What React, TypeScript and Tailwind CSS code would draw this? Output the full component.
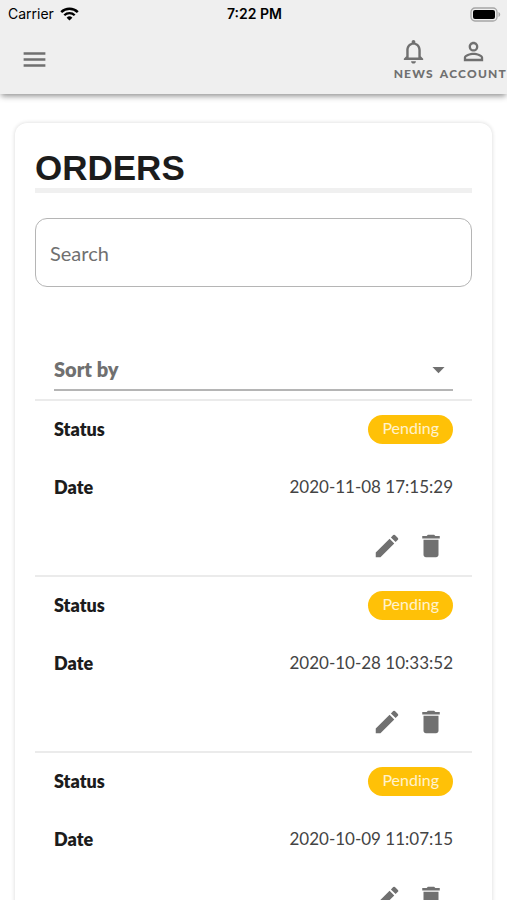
import { useState } from 'react';
import {
    MdArrowDropDown,
    MdDelete,
    MdEdit,
    MdMenu,
    MdNotificationsNone,
    MdPersonOutline,
} from 'react-icons/md';

interface Order {
    id: number;
    status: string;
    date: string;
}

const initialOrders: Order[] = [
    { id: 1, status: 'Pending', date: '2020-11-08 17:15:29' },
    { id: 2, status: 'Pending', date: '2020-10-28 10:33:52' },
    { id: 3, status: 'Pending', date: '2020-10-09 11:07:15' },
];

function StatusBar() {
    return (
        <div className="grid h-7 grid-cols-3 items-center pr-1.5 pl-2 font-['Inter',sans-serif] text-sm text-black">
            <div className="flex items-center gap-1.5">
                <span>Carrier</span>
                <svg width="19" height="14" viewBox="0 0 19 14" fill="none" stroke="currentColor">
                    <path d="M1.2 5.2a11.8 11.8 0 0 1 16.6 0" strokeWidth="2.5" />
                    <path d="M4.3 8.3a7.4 7.4 0 0 1 10.4 0" strokeWidth="2.3" />
                    <path d="M9.5 13.6 6.6 10.7a4.1 4.1 0 0 1 5.8 0z" fill="currentColor" stroke="none" />
                </svg>
            </div>
            <span className="text-center font-semibold">7:22 PM</span>
            <svg className="justify-self-end" width="31" height="15" viewBox="0 0 31 15">
                <rect x="1" y="1" width="26" height="13" rx="4" fill="none" stroke="#a6a6a6" strokeWidth="1.3" />
                <rect x="3" y="3" width="22" height="9" rx="2" fill="#000" />
                <path d="M28.5 5v5c1-.4 1.7-1.3 1.7-2.5s-.7-2.1-1.7-2.5z" fill="#a6a6a6" />
            </svg>
        </div>
    );
}

function Header() {
    return (
        <header className="relative shrink-0 bg-[#efefef] shadow-[0_3px_6px_-1px_rgba(0,0,0,0.45)]">
            <StatusBar />
            <div className="flex h-[66px] items-start justify-between pl-5 text-[#707070]">
                <button type="button" aria-label="Menu" className="mt-[17px]">
                    <MdMenu size={29} />
                </button>
                <nav className="mt-[9px] flex gap-1.5 text-xs font-black tracking-widest">
                    <button type="button" className="flex flex-col items-center">
                        <MdNotificationsNone size={29} />
                        NEWS
                    </button>
                    <button type="button" className="flex flex-col items-center">
                        <MdPersonOutline size={29} />
                        ACCOUNT
                    </button>
                </nav>
            </div>
        </header>
    );
}

interface OrderItemProps {
    order: Order;
    onDelete: (id: number) => void;
}

function OrderItem({ order, onDelete }: OrderItemProps) {
    return (
        <li className="border-t-2 border-[#ebebeb] px-[19px]">
            <div className="flex h-[58px] items-center justify-between pb-0.5">
                <span className="text-lg font-extrabold">Status</span>
                <span className="rounded-full bg-[#ffc107] px-3.5 pt-px pb-1 text-base leading-6 text-white/80">
                    {order.status}
                </span>
            </div>
            <div className="flex h-[58px] items-center justify-between pb-0.5">
                <span className="text-lg font-extrabold">Date</span>
                <span className="text-[17px] text-[#444]">{order.date}</span>
            </div>
            <div className="flex h-[58px] items-center justify-end gap-3.5 pr-[7px] text-[#707070]">
                <button type="button" aria-label="Edit order">
                    <MdEdit size={30} />
                </button>
                <button type="button" aria-label="Delete order" onClick={() => onDelete(order.id)}>
                    <MdDelete size={30} />
                </button>
            </div>
        </li>
    );
}

export default function App() {
    const [orders, setOrders] = useState<Order[]>(initialOrders);
    const [search, setSearch] = useState('');
    const [sortBy, setSortBy] = useState('');

    const visible = orders
        .filter((o) => `${o.status} ${o.date}`.toLowerCase().includes(search.toLowerCase()))
        .sort((a, b) => (sortBy === 'date' ? a.date.localeCompare(b.date) : 0));

    return (
        <div className="flex h-screen flex-col overflow-hidden bg-white font-['Lato',sans-serif] text-[#1c1c1c]">
            <Header />
            <main className="px-[15px] pt-[29px]">
                <section className="rounded-xl bg-white px-5 pt-[25px] shadow-[0_0_4px_rgba(0,0,0,0.16)]">
                    <h1 className="border-b-[5px] border-[#f0f0f0] font-['Liberation_Sans',sans-serif] text-[35px] leading-10 font-bold">
                        ORDERS
                    </h1>
                    <input
                        type="text"
                        aria-label="Search"
                        placeholder="Search"
                        value={search}
                        onChange={(e) => setSearch(e.target.value)}
                        className="mt-[25px] h-[69px] w-full rounded-xl border border-[#b5b5b5] px-3.5 text-xl outline-none placeholder:text-[#707070]"
                    />
                    <div className="relative mx-[19px] mt-[62px] mb-2 text-[#707070]">
                        <select
                            aria-label="Sort by"
                            value={sortBy}
                            onChange={(e) => setSortBy(e.target.value)}
                            className="h-[42px] w-full appearance-none border-b-2 border-[#b5b5b5] text-xl font-extrabold outline-none"
                        >
                            <option value="">Sort by</option>
                            <option value="status">Status</option>
                            <option value="date">Date</option>
                        </select>
                        <MdArrowDropDown size={29} className="pointer-events-none absolute top-1.5 right-0" />
                    </div>
                    <ul>
                        {visible.map((order) => (
                            <OrderItem
                                key={order.id}
                                order={order}
                                onDelete={(id) => setOrders((prev) => prev.filter((o) => o.id !== id))}
                            />
                        ))}
                    </ul>
                </section>
            </main>
        </div>
    );
}
